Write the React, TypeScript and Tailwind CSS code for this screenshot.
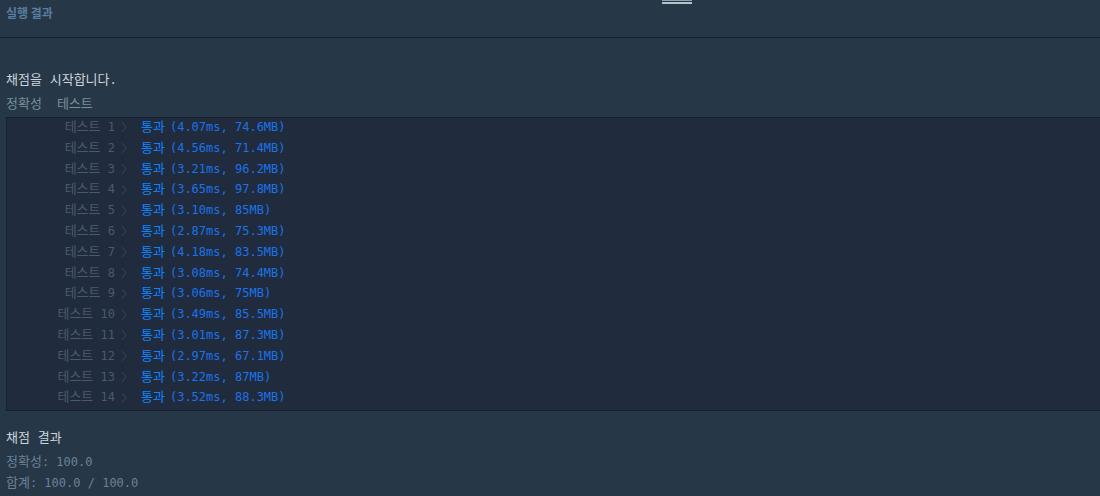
const results: [string, string][] = [
  ['4.07ms', '74.6MB'],
  ['4.56ms', '71.4MB'],
  ['3.21ms', '96.2MB'],
  ['3.65ms', '97.8MB'],
  ['3.10ms', '85MB'],
  ['2.87ms', '75.3MB'],
  ['4.18ms', '83.5MB'],
  ['3.08ms', '74.4MB'],
  ['3.06ms', '75MB'],
  ['3.49ms', '85.5MB'],
  ['3.01ms', '87.3MB'],
  ['2.97ms', '67.1MB'],
  ['3.22ms', '87MB'],
  ['3.52ms', '88.3MB'],
];

const mono = "font-['DejaVu_Sans_Mono','Noto_Sans_CJK_KR',monospace]";

// hangul in the reference font runs a little wider than the latin glyphs
function K({ children }: { children: string }) {
  return <span className="text-[13px]">{children}</span>;
}

function Chevron() {
  return (
    <svg width="8" height="12" viewBox="0 0 8 12" className="shrink-0">
      <polyline points="2,1 6,6 2,11" fill="none" stroke="#34465a" strokeWidth="1" />
    </svg>
  );
}

export default function App() {
  return (
    <div className="relative w-[1100px] h-[496px] overflow-hidden bg-[#263747]">
      {/* resize handle */}
      <div className="absolute left-[662px] top-0 w-[30px]">
        <div className="h-px bg-[#8fa0ad]" />
        <div className="h-px" />
        <div className="h-[2px] bg-[#b4c2cc]" />
      </div>

      <div className="h-[38px] border-b border-[#172130] px-[6px] flex items-center">
        <span className="font-['Noto_Sans_CJK_KR',sans-serif] font-bold text-[12px] text-[#5a7da0] -mt-[11px]">
          실행 결과
        </span>
      </div>

      <div className={`${mono} text-[12px] leading-[21px] pl-[6px]`}>
        <div className="mt-[31px] h-[21px] text-[#cdd5dc]">
          <K>채점을 시작합니다</K>.
        </div>
        <div className="mt-[3px] h-[21px] text-[#78909c]">
          <K>정확성</K>
          <span className="ml-[15px]">
            <K>테스트</K>
          </span>
        </div>

        <div className="mt-[3px] bg-[#202b3d] border border-r-0 border-[#18212e] pb-[2px]">
          <div className="-mt-px">
            {results.map(([ms, mb], i) => (
              <div key={i} className="flex items-center h-[20.8px] leading-[20.8px]">
                <div className="w-[108px] text-right text-[#4a5a6c]">
                  <K>테스트</K> {i + 1}
                </div>
                <div className="ml-[5px] mr-[13px] flex items-center">
                  <Chevron />
                </div>
                <span className="text-[#0c84ff]">
                  <K>통과</K>
                </span>
                <span className="ml-[5px] text-[#1b73ea]">({ms}, {mb})</span>
              </div>
            ))}
          </div>
        </div>

        <div className="mt-[16px] h-[21px] text-[#cdd5dc]">
          <K>채점 결과</K>
        </div>
        <div className="mt-[3px] h-[21px] text-[#6a8299]">
          <K>정확성</K>: 100.0
        </div>
        <div className="mt-0 h-[21px] text-[#6a8299]">
          <K>합계</K>: 100.0 / 100.0
        </div>
      </div>
    </div>
  );
}
